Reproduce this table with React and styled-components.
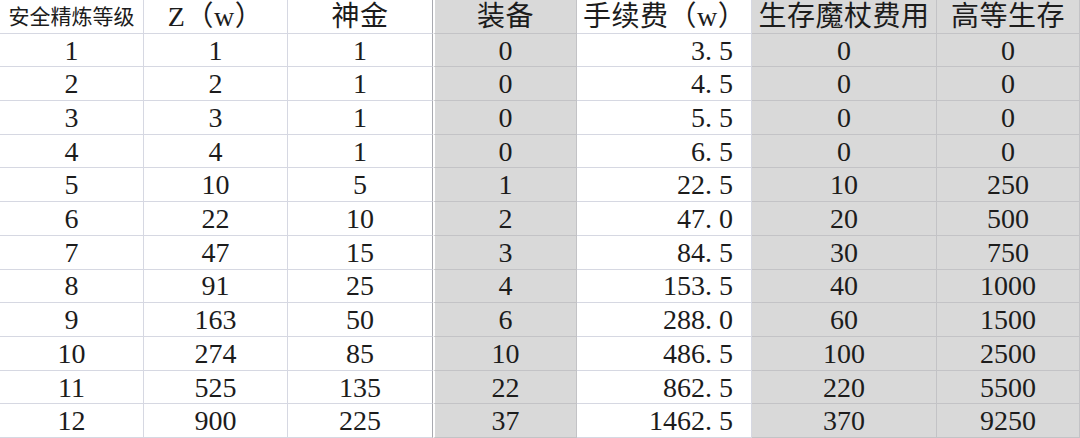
import React from "react";
import styled, { createGlobalStyle } from "styled-components";

const GlobalStyle = createGlobalStyle`
  html, body {
    margin: 0;
    padding: 0;
    background: #fff;
  }
  body {
    font-family: "Liberation Serif", "Noto Sans CJK SC", serif;
    color: #1c1c1c;
  }
`;

const Sheet = styled.div`
  display: grid;
  grid-template-columns: 144px 144px 145px 144px 175px 185px 143px;
  grid-template-rows: repeat(13, minmax(0, 1fr));
  width: 1080px;
  height: 438px;
  overflow: hidden;
`;

const Cell = styled.div`
  display: flex;
  align-items: center;
  justify-content: ${({ $align }) =>
    $align === "right" ? "flex-end" : $align === "left" ? "flex-start" : "center"};
  padding: ${({ $align }) =>
    $align === "right" ? "2px 18px 0 0" : $align === "left" ? "2px 0 0 6px" : "2px 0 0 0"};
  background: ${({ $shaded }) => ($shaded ? "#d9d9d9" : "#fff")};
  border-right: 1px solid ${({ $shaded, $beforeEdge }) =>
    $beforeEdge ? "#a9aab0" : $shaded ? "#c3c3c6" : "#d6d8e2"};
  border-bottom: 1px solid ${({ $shaded }) => ($shaded ? "#c3c3c6" : "#d6d8e2")};
  border-left: ${({ $edge }) => ($edge ? "2px solid #fff" : "none")};
  font-size: 28px;
  white-space: nowrap;
  box-sizing: border-box;
  line-height: 1.1;
  min-height: 0;
`;

const HeadText = styled.span`
  font-family: "Liberation Serif", "Noto Sans CJK SC", sans-serif;
  font-weight: 400;
  font-size: ${({ $small }) => ($small ? "21px" : "28px")};
  letter-spacing: ${({ $small }) => ($small ? "0" : "0.5px")};
  line-height: 1.1;
`;

const Num = styled.span`
  font-family: "Liberation Serif", serif;
`;

const Dot = styled.span`
  display: inline-block;
  width: 14px;
  text-align: left;
`;

const columns = [
  { title: "安全精炼等级", small: true },
  { title: "Z（w）" },
  { title: "神金", beforeEdge: true },
  { title: "装备", shaded: true, edge: true },
  { title: "手续费（w）", align: "right" },
  { title: "生存魔杖费用", shaded: true },
  { title: "高等生存", shaded: true },
];

const rows = [
  [1, 1, 1, 0, "3.5", 0, 0],
  [2, 2, 1, 0, "4.5", 0, 0],
  [3, 3, 1, 0, "5.5", 0, 0],
  [4, 4, 1, 0, "6.5", 0, 0],
  [5, 10, 5, 1, "22.5", 10, 250],
  [6, 22, 10, 2, "47.0", 20, 500],
  [7, 47, 15, 3, "84.5", 30, 750],
  [8, 91, 25, 4, "153.5", 40, 1000],
  [9, 163, 50, 6, "288.0", 60, 1500],
  [10, 274, 85, 10, "486.5", 100, 2500],
  [11, 525, 135, 22, "862.5", 220, 5500],
  [12, 900, 225, 37, "1462.5", 370, 9250],
];

function Fee({ value }) {
  const [whole, frac] = value.split(".");
  return (
    <Num>
      {whole}
      <Dot>.</Dot>
      {frac}
    </Num>
  );
}

export default function App() {
  return (
    <>
      <GlobalStyle />
      <Sheet>
        {columns.map((c, i) => (
          <Cell
            key={"h" + i}
            $shaded={c.shaded}
            $edge={c.edge}
            $beforeEdge={c.beforeEdge}
            $align={c.align === "right" ? "left" : "center"}
          >
            <HeadText $small={c.small}>{c.title}</HeadText>
          </Cell>
        ))}
        {rows.map((r, ri) =>
          r.map((v, ci) => {
            const c = columns[ci];
            return (
              <Cell
                key={ri + "-" + ci}
                $shaded={c.shaded}
                $edge={c.edge}
                $beforeEdge={c.beforeEdge}
                $align={c.align}
              >
                {ci === 4 ? <Fee value={v} /> : <Num>{v}</Num>}
              </Cell>
            );
          })
        )}
      </Sheet>
    </>
  );
}
